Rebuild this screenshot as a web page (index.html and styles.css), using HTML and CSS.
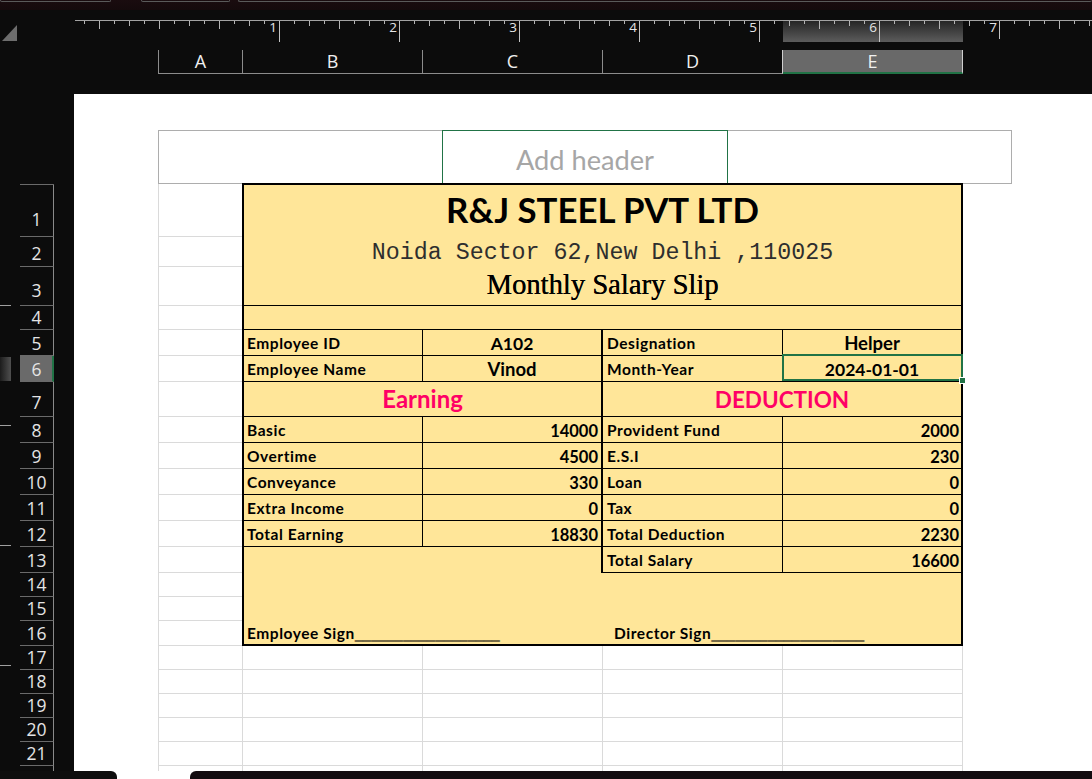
FILE: index.html
```html
<!DOCTYPE html>
<html lang="en">
<head>
<meta charset="utf-8">
<title>Salary Slip - Page Layout</title>
<link rel="stylesheet" href="styles.css">
</head>
<body>
<div class="app">
  <div class="topstrip">
    <div class="ts ts1"></div>
    <div class="ts ts2"></div>
    <div class="ts ts3"></div>
  </div>

  <div class="rulerrow">
    <div class="corner">
      <svg class="tri" width="15" height="16" viewBox="0 0 15 16"><polygon points="15,0 15,16 0,16" fill="#6d6d6d"/></svg>
    </div>
    <div class="ruler">
      <div class="inch">1</div>
      <div class="inch">2</div>
      <div class="inch">3</div>
      <div class="inch">4</div>
      <div class="inch">5</div>
      <div class="inch">6</div>
      <div class="inch inch-short">7</div>
    </div>
  </div>

  <div class="gap8"></div>

  <div class="colheads">
    <div class="ch ch-a">A</div>
    <div class="ch ch-w">B</div>
    <div class="ch ch-w">C</div>
    <div class="ch ch-w ch-d">D</div>
    <div class="ch ch-w ch-e">E</div>
  </div>

  <div class="gap20"></div>

  <div class="main">
    <div class="gutter">
      <div class="vruler"></div>
      <div class="rowheads">
        <div class="rh-list">
          <div class="rh h52">1</div>
          <div class="rh h30">2</div>
          <div class="rh h39">3</div>
          <div class="rh h24">4</div>
          <div class="rh h26">5</div>
          <div class="rh h26 on">6</div>
          <div class="rh h35">7</div>
          <div class="rh h26">8</div>
          <div class="rh h26">9</div>
          <div class="rh h26">10</div>
          <div class="rh h26">11</div>
          <div class="rh h26">12</div>
          <div class="rh h26">13</div>
          <div class="rh h24">14</div>
          <div class="rh h24">15</div>
          <div class="rh h25">16</div>
          <div class="rh h24">17</div>
          <div class="rh h24">18</div>
          <div class="rh h24">19</div>
          <div class="rh h24">20</div>
          <div class="rh h24">21</div>
          <div class="rh h24"></div>
        </div>
      </div>
    </div>

    <div class="page">
      <div class="hdrbox">
        <div class="hb-side hb-left"></div>
        <div class="hb-mid">Add header</div>
        <div class="hb-side hb-right"></div>
      </div>

      <div class="sheet">
        <div class="g a"></div><div class="g a"></div><div class="g a"></div><div class="g a"></div>
        <div class="g a"></div><div class="g a"></div><div class="g a"></div><div class="g a"></div>
        <div class="g a"></div><div class="g a"></div><div class="g a"></div><div class="g a"></div>
        <div class="g a"></div><div class="g a"></div><div class="g a"></div><div class="g a"></div>

        <div class="g a"></div><div class="g"></div><div class="g"></div><div class="g"></div><div class="g"></div>
        <div class="g a"></div><div class="g"></div><div class="g"></div><div class="g"></div><div class="g"></div>
        <div class="g a"></div><div class="g"></div><div class="g"></div><div class="g"></div><div class="g"></div>
        <div class="g a"></div><div class="g"></div><div class="g"></div><div class="g"></div><div class="g"></div>
        <div class="g a"></div><div class="g"></div><div class="g"></div><div class="g"></div><div class="g"></div>
        <div class="g a"></div><div class="g"></div><div class="g"></div><div class="g"></div><div class="g"></div>

        <div class="slip">
          <div class="c span4 title">R&amp;J STEEL PVT LTD</div>
          <div class="c span4 addr">Noida Sector 62,New Delhi ,110025</div>
          <div class="c span4 sub bb">Monthly Salary Slip</div>
          <div class="c span4 bb"></div>

          <div class="c lbl br bb">Employee ID</div>
          <div class="c val dig br2 bb">A102</div>
          <div class="c lbl lbl-d br bb">Designation</div>
          <div class="c val bb">Helper</div>

          <div class="c lbl br bb">Employee Name</div>
          <div class="c val br2 bb">Vinod</div>
          <div class="c lbl lbl-d br bb">Month-Year</div>
          <div class="c val dig bb sel">2024-01-01</div>

          <div class="c span2 head head-e br2 bb">Earning</div>
          <div class="c span2 head head-d bb">DEDUCTION</div>

          <div class="c lbl br bb">Basic</div>
          <div class="c num br2 bb">14000</div>
          <div class="c lbl lbl-d br bb">Provident Fund</div>
          <div class="c num num-e bb">2000</div>

          <div class="c lbl br bb">Overtime</div>
          <div class="c num br2 bb">4500</div>
          <div class="c lbl lbl-d br bb">E.S.I</div>
          <div class="c num num-e bb">230</div>

          <div class="c lbl br bb">Conveyance</div>
          <div class="c num br2 bb">330</div>
          <div class="c lbl lbl-d br bb">Loan</div>
          <div class="c num num-e bb">0</div>

          <div class="c lbl br bb">Extra Income</div>
          <div class="c num br2 bb">0</div>
          <div class="c lbl lbl-d br bb">Tax</div>
          <div class="c num num-e bb">0</div>

          <div class="c lbl br bb">Total Earning</div>
          <div class="c num br2 bb">18830</div>
          <div class="c lbl lbl-d br bb">Total Deduction</div>
          <div class="c num num-e bb">2230</div>

          <div class="c span2 br2"></div>
          <div class="c lbl lbl-d br bb">Total Salary</div>
          <div class="c num num-e bb">16600</div>

          <div class="sig">
            <div class="s1">Employee Sign<span class="ul">__________________</span></div>
            <div class="s2">Director Sign<span class="ul">___________________</span></div>
          </div>
        </div>
      </div>
    </div>
  </div>

  <div class="bottombar">
    <div class="bt1"></div>
    <div class="bt2"></div>
  </div>
</div>
</body>
</html>
```

FILE: styles.css
```css
* {
  box-sizing: border-box;
  margin: 0;
  padding: 0;
}

html,
body {
  width: 1092px;
  height: 779px;
  overflow: hidden;
  background: #0c0c0c;
}

body {
  font-family: "Open Sans", "Noto Sans", sans-serif;
}

.app {
  display: flex;
  flex-direction: column;
  height: 779px;
}

/* ---------- top strip ---------- */
.topstrip {
  height: 20px;
  flex: none;
  display: flex;
  align-items: flex-start;
  background: linear-gradient(#1a0c0f 0, #150a0c 10px, #0c0c0c 10px);
}

.ts {
  height: 2px;
  border: 1px solid #5a5a5a;
  border-top: none;
  border-radius: 0 0 4px 4px;
}

.ts1 { width: 111px; margin-right: 30px; }
.ts2 { width: 89px; margin-right: 8px; }
.ts3 { flex: 1; border-right: none; }

/* ---------- ruler ---------- */
.rulerrow {
  height: 22px;
  flex: none;
  display: flex;
}

.corner {
  width: 75px;
  flex: none;
  padding: 5px 0 0 2px;
}

.tri {
  display: block;
}

.ruler {
  flex: 1;
  display: flex;
  padding-left: 85px;
  border-top: 1px solid #a3a3a3;
  background:
    linear-gradient(90deg, #b5b5b5 1px, transparent 1px) 9px 0 / 15px 3px repeat-x,
    linear-gradient(90deg, #b5b5b5 1px, transparent 1px) 24px 0 / 30px 5px repeat-x,
    linear-gradient(90deg, #b5b5b5 1px, transparent 1px) 24px 0 / 60px 8px repeat-x,
    linear-gradient(#262626, #5c5c5c) 708px 0 / 180px 100% no-repeat,
    #0c0c0c;
}

.inch {
  width: 120px;
  flex: none;
  border-right: 1px solid #c4c4c4;
  text-align: right;
  padding-right: 2px;
  font-size: 13.5px;
  line-height: 1;
  color: #e6e6e6;
}

.inch-short {
  height: 18px;
}

.gap8 {
  height: 8px;
  flex: none;
}

.gap20 {
  height: 20px;
  flex: none;
}

/* ---------- column headers ---------- */
.colheads {
  height: 24px;
  flex: none;
  display: flex;
  margin-left: 158px;
}

.ch {
  display: flex;
  justify-content: center;
  padding-top: 2px;
  border-right: 1px solid #8c8c8c;
  border-bottom: 1px solid #8c8c8c;
  font-size: 18px;
  line-height: 1;
  color: #f0f0f0;
}

.ch-a {
  width: 85px;
  border-left: 1px solid #8c8c8c;
}

.ch-w {
  width: 180px;
}

.ch-d {
  border-right-color: #cfcfcf;
}

.ch-e {
  background: #696969;
  border-right-color: #cfcfcf;
  border-bottom: 2px solid #217346;
}

/* ---------- main area ---------- */
.main {
  height: 677px;
  flex: none;
  display: flex;
}

.gutter {
  width: 74px;
  flex: none;
  display: flex;
  background: #0c0c0c;
}

.vruler {
  width: 11px;
  flex: none;
  padding-top: 200px;
  background-image:
    linear-gradient(to bottom, #a0a0a0 1px, transparent 1px),
    linear-gradient(to right, #1c1c1c, #4f4f4f);
  background-size: 11px 120px, 11px 24px;
  background-position: 0 11px, 0 63px;
  background-repeat: repeat-y, no-repeat;
  background-origin: content-box;
  background-clip: content-box;
}

.rowheads {
  margin-left: 9px;
  width: 34px;
  flex: none;
  padding-top: 90px;
}

.rh-list {
  border-top: 1px solid #6a6a6a;
}

.rh {
  display: flex;
  align-items: flex-end;
  justify-content: center;
  padding-bottom: 3px;
  border-bottom: 1px solid #6a6a6a;
  border-right: 1px solid #8a8a8a;
  font-size: 17.5px;
  line-height: 1;
  color: #e4e4e4;
}

.h52 { height: 52px; padding-bottom: 8px; }
.h30 { height: 30px; padding-bottom: 4px; }
.h39 { height: 39px; padding-bottom: 6px; }
.h35 { height: 35px; padding-bottom: 5px; }
.h26 { height: 26px; }
.h25 { height: 25px; }
.h24 { height: 24px; }

.rh.on {
  background: #6a6a6a;
  border-right: 2px solid #217346;
  padding-left: 1px;
}

/* ---------- page ---------- */
.page {
  flex: 1;
  background: #ffffff;
  padding: 36px 0 0 84px;
  overflow: hidden;
}

.hdrbox {
  display: flex;
  width: 854px;
  height: 54px;
}

.hb-side {
  width: 284px;
  border: 1px solid #adadad;
}

.hb-left { border-right: none; }
.hb-right { border-left: none; }

.hb-mid {
  width: 286px;
  border: 1px solid #217346;
  display: flex;
  align-items: center;
  justify-content: center;
  padding-top: 5px;
  font-family: "Lato", sans-serif;
  font-size: 27.2px;
  line-height: 1;
  color: #a6a6a6;
}

.sheet {
  display: grid;
  grid-template-columns: 85px repeat(4, 180px);
  grid-template-rows: 53px 30px 39px 24px 26px 26px 35px repeat(6, 26px) 24px 24px 25px repeat(6, 24px);
}

.g {
  border-right: 1px solid #dadada;
  border-bottom: 1px solid #dadada;
}

.g.a {
  border-left: 1px solid #dadada;
}

/* ---------- salary slip ---------- */
.slip {
  grid-column: 2 / 6;
  grid-row: 1 / 17;
  margin: -1px 0 0 -1px;
  border: 2px solid #000;
  background: #ffe699;
  display: grid;
  grid-template-columns: 179px 180px 180px 178px;
  grid-template-rows: 51px 30px 40px 24px 26px 26px 35px repeat(6, 26px) 71px;
  font-family: "Lato", sans-serif;
  font-weight: 700;
  color: #000;
}

.c {
  display: flex;
  align-items: flex-end;
  min-width: 0;
  white-space: nowrap;
  line-height: 1;
}

.span4 {
  grid-column: span 4;
  justify-content: center;
}

.span2 {
  grid-column: span 2;
  justify-content: center;
}

.br { border-right: 1px solid #000; }
.br2 { border-right: 2px solid #000; }
.bb { border-bottom: 1px solid #000; }

.title {
  font-size: 34.8px;
  padding-bottom: 8px;
}

.addr {
  font-family: "Liberation Mono", monospace;
  font-weight: 400;
  font-size: 23.3px;
  padding-bottom: 1px;
  color: #2e2e2e;
}

.sub {
  font-family: "Liberation Serif", serif;
  font-weight: 400;
  font-size: 28.6px;
  padding-bottom: 5px;
  text-shadow: 0.25px 0 0 #000;
}

.lbl {
  font-size: 15.5px;
  letter-spacing: 0.55px;
  padding: 0 0 4px 3px;
}

.lbl-d {
  padding-left: 4px;
}

.val {
  font-size: 18.5px;
  justify-content: center;
  padding-bottom: 3px;
}

.val.dig {
  font-size: 17.5px;
}

.num {
  font-size: 16.5px;
  justify-content: flex-end;
  padding: 0 3px 3px 0;
}

.num-e {
  padding-right: 2px;
}

.head {
  color: #ff0066;
  padding-bottom: 5px;
}

.head-e {
  font-size: 24px;
}

.head-d {
  font-size: 22.5px;
}

.sel {
  position: relative;
}

.sel::before {
  content: "";
  position: absolute;
  inset: -2px -2px 0 -1px;
  border: 2px solid #217346;
}

.sel::after {
  content: "";
  position: absolute;
  right: -4px;
  bottom: -2px;
  width: 5px;
  height: 5px;
  background: #217346;
  outline: 1px solid #ffffff;
}

.sig {
  grid-column: span 4;
  display: flex;
  align-items: flex-end;
  font-size: 15.5px;
  letter-spacing: 0.55px;
  line-height: 1.3;
}

.s1 {
  width: 359px;
  padding-left: 3px;
  white-space: nowrap;
}

.s2 {
  padding-left: 11px;
  white-space: nowrap;
}

.ul {
  font-family: "Liberation Sans", Arial, sans-serif;
  font-weight: 700;
  font-size: 14.5px;
  letter-spacing: 0;
  text-shadow: 0 0.8px 0 #000;
}

/* ---------- bottom bar ---------- */
.bottombar {
  height: 8px;
  flex: none;
  display: flex;
  background: #ffffff;
}

.bt1 {
  width: 117px;
  background: #0e0e0e;
  border-top-right-radius: 6px;
}

.bt2 {
  flex: 1;
  margin-left: 73px;
  background: #120c10;
  border-top-left-radius: 6px;
}
```
